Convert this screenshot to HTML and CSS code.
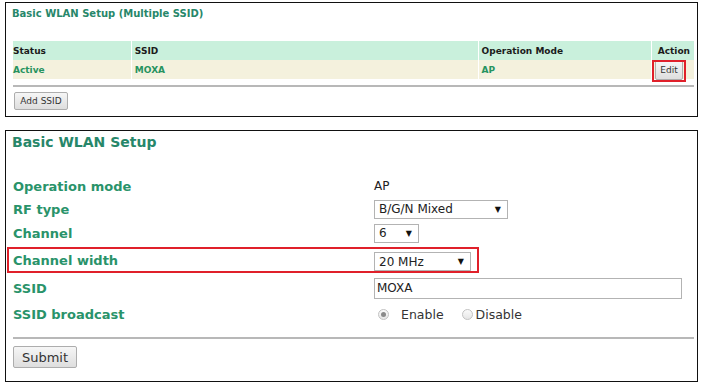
FILE: index.html
```html
<!DOCTYPE html>
<html lang="en">
<head>
    <meta charset="UTF-8">
    <title>Basic WLAN Setup</title>
    <link rel="stylesheet" href="styles.css">
</head>
<body>
    <div class="panel panel-ssid">
        <div class="panel-title small">Basic WLAN Setup (Multiple SSID)</div>
        <table class="ssid-table">
            <tr class="head">
                <th class="col-status">Status</th>
                <th class="col-ssid">SSID</th>
                <th class="col-mode">Operation Mode</th>
                <th class="col-action">Action</th>
            </tr>
            <tr class="data">
                <td>Active</td>
                <td>MOXA</td>
                <td>AP</td>
                <td class="col-action cell-edit">
                    <span class="edit-wrap">
                        <button class="btn btn-edit">Edit</button>
                        <span class="mark mark-edit"></span>
                    </span>
                </td>
            </tr>
        </table>
        <div class="rule"></div>
        <button class="btn btn-add">Add SSID</button>
    </div>

    <div class="panel panel-basic">
        <div class="panel-title">Basic WLAN Setup</div>
        <div class="form">
            <div class="row r-mode">
                <div class="label">Operation mode</div>
                <div class="value">AP</div>
            </div>
            <div class="row r-rf">
                <div class="label">RF type</div>
                <div class="value"><span class="select w-rf"><span>B/G/N Mixed</span><span class="arrow">&#9660;</span></span></div>
            </div>
            <div class="row r-channel">
                <div class="label">Channel</div>
                <div class="value"><span class="select w-ch"><span>6</span><span class="arrow">&#9660;</span></span></div>
            </div>
            <div class="row r-width marked">
                <div class="label">Channel width</div>
                <div class="value"><span class="select w-bw"><span>20 MHz</span><span class="arrow">&#9660;</span></span></div>
            </div>
            <div class="row r-ssid">
                <div class="label">SSID</div>
                <div class="value"><span class="text-input">MOXA</span></div>
            </div>
            <div class="row r-bcast">
                <div class="label">SSID broadcast</div>
                <div class="value radios">
                    <span class="radio checked"></span><span class="radio-label first">Enable</span>
                    <span class="radio second"></span><span class="radio-label">Disable</span>
                </div>
            </div>
        </div>
        <div class="rule"></div>
        <button class="btn btn-submit">Submit</button>
    </div>
</body>
</html>
```
FILE: styles.css
```css
body {
    margin: 0;
    padding: 2px 4px 2px 5px;
    background-color: #fff;
    font-family: "DejaVu Sans", Verdana, sans-serif;
    color: #222;
}
.panel {
    border: 1px solid #111;
    width: 691px;
}
.panel-ssid {
    padding: 4px 3px 6px 6px;
    width: 682px;
}
.panel-basic {
    margin-top: 13px;
    padding: 2px 0 13px 0;
    width: 691px;
}
.panel-title {
    color: #27876a;
    font-weight: bold;
    font-size: 14px;
    line-height: 18px;
    padding-left: 6px;
}
.panel-title.small {
    font-size: 10px;
    line-height: 14px;
    padding-left: 0;
}

/* SSID list */
.ssid-table {
    margin-top: 20px;
    margin-left: 1px;
    width: 681px;
    border-collapse: collapse;
    font-size: 9px;
    font-weight: bold;
}
.ssid-table th,
.ssid-table td {
    height: 19px;
    padding: 0 3px;
    text-align: left;
    border-left: 1px solid #fff;
}
.ssid-table th:first-child,
.ssid-table td:first-child {
    border-left: none;
    padding-left: 0;
}
.ssid-table tr.head {
    background-color: #c9f0dc;
    color: #1b1b1b;
}
.ssid-table tr.data {
    background-color: #f4f1dd;
    color: #27935f;
}
.col-status { width: 116px; }
.col-ssid { width: 344px; }
.col-mode { width: 168px; }
.ssid-table .col-action {
    text-align: right;
    padding-right: 4px;
}
.ssid-table .cell-edit {
    padding-right: 11px;
}
.edit-wrap {
    position: relative;
    display: inline-block;
    vertical-align: middle;
}
.mark {
    position: absolute;
    border: 2px solid #e0202a;
    pointer-events: none;
}
.mark-edit {
    left: -3px;
    top: -1px;
    right: -3px;
    bottom: -3px;
}

.btn {
    font-family: "DejaVu Sans", Verdana, sans-serif;
    color: #333;
    background: linear-gradient(#f6f6f6, #dedede);
    border: 1px solid #adadad;
    border-radius: 2px;
    padding: 0;
    display: block;
}
.btn-edit {
    font-size: 9px;
    height: 20px;
    width: 28px;
    margin: -1px 0;
}
.btn-add {
    font-size: 9px;
    height: 18px;
    width: 54px;
    margin-left: 2px;
}
.btn-submit {
    font-size: 13px;
    height: 22px;
    width: 64px;
    margin-left: 7px;
}
.rule {
    height: 2px;
    background-color: #b8b8b8;
    margin: 6px 0 5px 1px;
}
.panel-basic .rule {
    margin: 10px 3px 7px 7px;
    height: 2px;
}

/* Basic setup form */
.form {
    margin-top: 24px;
}
.row {
    display: flex;
    align-items: center;
    height: 24px;
    padding-left: 7px;
}
.r-mode { height: 22px; }
.r-ssid { height: 26px; margin-top: 2px; }
.r-bcast { height: 26px; }
.row.marked {
    margin: 2px 0 0 1px;
    width: 464px;
    height: 22px;
    padding-left: 4px;
    border: 2px solid #e0202a;
}
.label {
    width: 361px;
    flex-shrink: 0;
    color: #29936a;
    font-weight: bold;
    font-size: 13px;
}
.value {
    font-size: 12px;
    color: #222;
}
.select {
    display: flex;
    align-items: center;
    justify-content: space-between;
    box-sizing: border-box;
    height: 19px;
    padding: 0 6px 0 4px;
    border: 1px solid #b3b3b3;
    background-color: #fff;
}
.select .arrow {
    font-size: 8px;
    color: #111;
}
.w-rf { width: 134px; }
.w-ch { width: 45px; }
.w-bw { width: 97px; height: 19px; margin-top: 3px; }
.text-input {
    display: block;
    box-sizing: border-box;
    width: 308px;
    height: 21px;
    line-height: 19px;
    padding-left: 2px;
    border: 1px solid #b3b3b3;
}
.radios {
    display: flex;
    align-items: center;
    font-size: 12.5px;
    padding-left: 4px;
}
.radio {
    box-sizing: border-box;
    width: 11px;
    height: 11px;
    border-radius: 50%;
    border: 1px solid #c2c2c2;
    background: linear-gradient(#fafafa, #e6e6e6);
    position: relative;
    margin-right: 12px;
}
.radio.second {
    margin-right: 3px;
}
.radio.checked::after {
    content: "";
    position: absolute;
    left: 2px;
    top: 2px;
    width: 5px;
    height: 5px;
    border-radius: 50%;
    background-color: #8a8a8a;
}
.radio-label {
    color: #333;
}
.radio-label.first {
    margin-right: 18px;
}
```
